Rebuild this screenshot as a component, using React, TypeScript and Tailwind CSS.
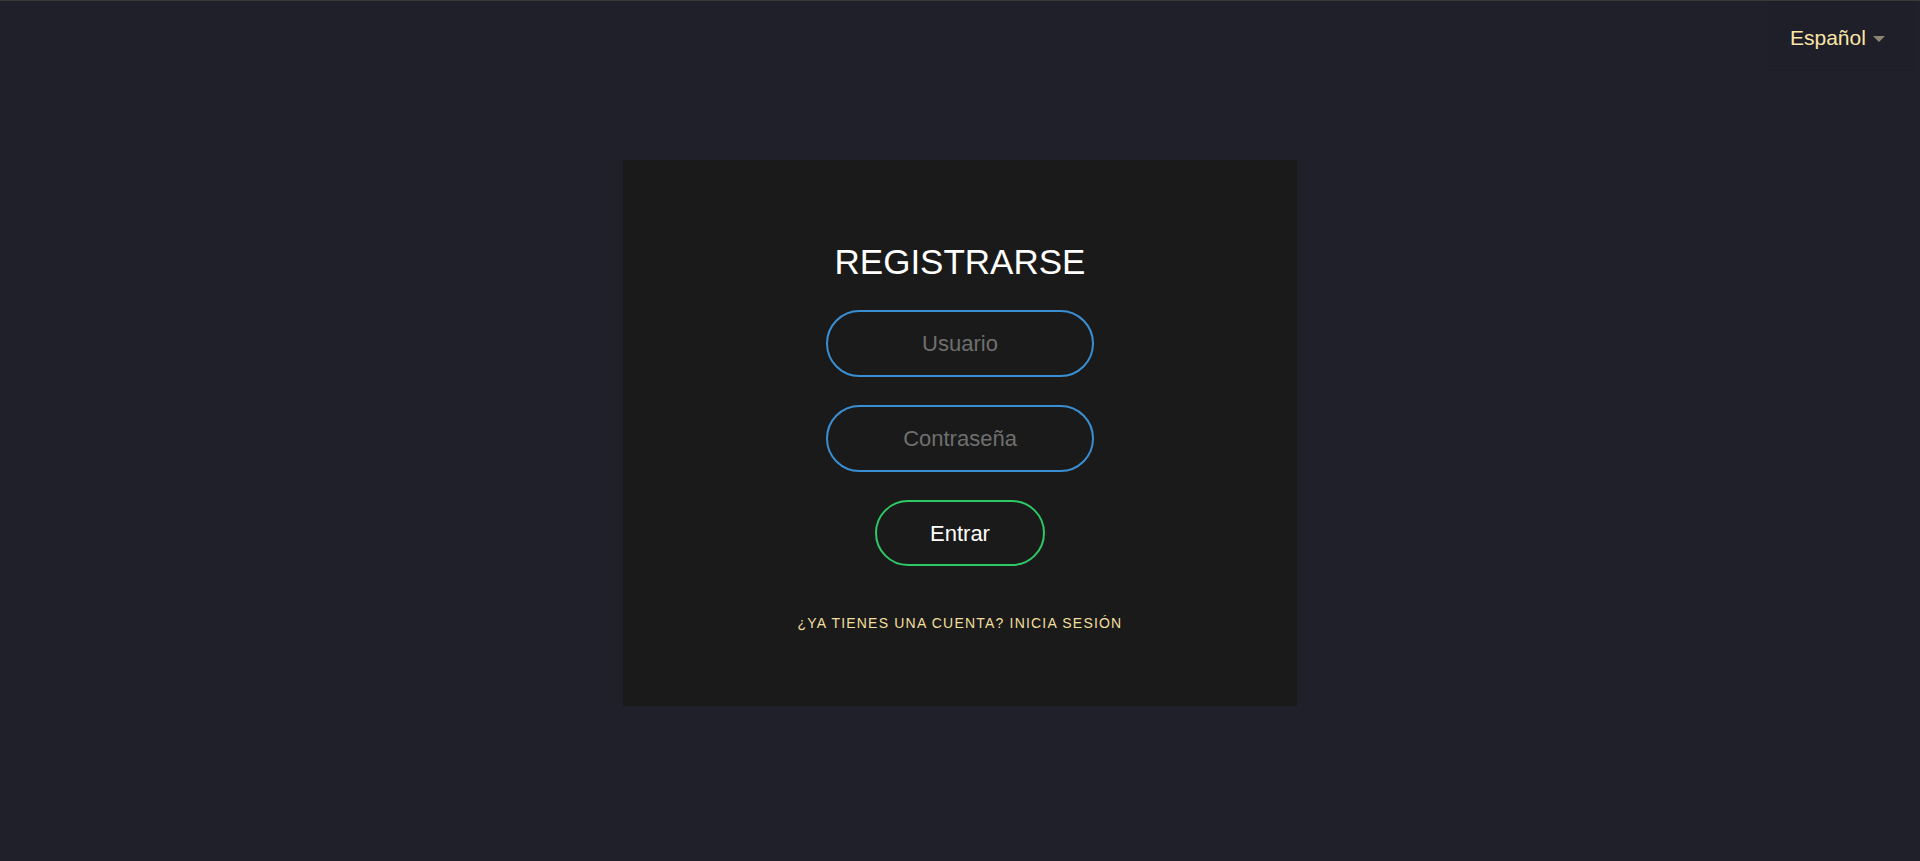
import { useState } from 'react';

export default function App() {
  const [user, setUser] = useState('');
  const [pass, setPass] = useState('');

  return (
    <div className="min-h-screen bg-[#20202a] border-t border-[#3a3a3a] font-['Liberation_Sans',Arial,sans-serif]">
      {/* Top bar */}
      <div className="flex justify-end h-[70px]">
        <div className="flex items-center gap-[7px] w-[147px] mr-[5px] pl-[22px] border-b border-[#1c1c24] bg-[#1f1f29] pt-[3px]">
          <span className="text-[21px] leading-none text-[#fbe6a6]">Español</span>
          <span className="mt-[3px] w-0 h-0 border-l-[6px] border-r-[6px] border-t-[6px] border-l-transparent border-r-transparent border-t-[#8a8470]" />
        </div>
      </div>

      {/* Card */}
      <div className="mx-auto mt-[89px] w-[674px] bg-[#1a1a1a] pt-[84px] pb-[76px] flex flex-col items-center">
        <h1 className="text-[35px] leading-none text-white">REGISTRARSE</h1>

        <input
          value={user}
          onChange={(e) => setUser(e.target.value)}
          placeholder="Usuario"
          className="mt-[31px] w-[268px] h-[67px] rounded-full border-2 border-[#3a8fd3] bg-transparent text-center text-[22px] text-white placeholder:text-[#6f6f6f] outline-none"
        />
        <input
          type="password"
          value={pass}
          onChange={(e) => setPass(e.target.value)}
          placeholder="Contraseña"
          className="mt-[28px] w-[268px] h-[67px] rounded-full border-2 border-[#3a8fd3] bg-transparent text-center text-[22px] text-white placeholder:text-[#6f6f6f] outline-none"
        />
        <button className="mt-[28px] w-[170px] h-[66px] rounded-full border-2 border-[#2ec866] bg-transparent text-[22px] text-white">
          Entrar
        </button>

        <a className="mt-[50px] text-[14px] leading-none tracking-[1.2px] text-[#f3df9f] cursor-pointer">
          ¿YA TIENES UNA CUENTA? INICIA SESIÓN
        </a>
      </div>
    </div>
  );
}
